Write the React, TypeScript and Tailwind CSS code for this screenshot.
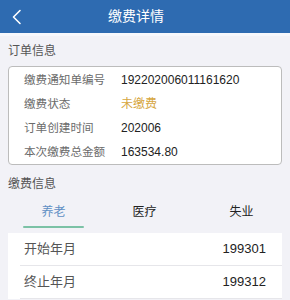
const font = { fontFamily: '"Liberation Sans", "Noto Sans CJK SC", sans-serif' };

const orderRows: { label: string; value: string; accent?: boolean }[] = [
  { label: "缴费通知单编号", value: "192202006011161620" },
  { label: "缴费状态", value: "未缴费", accent: true },
  { label: "订单创建时间", value: "202006" },
  { label: "本次缴费总金额", value: "163534.80" },
];

const periodRows = [
  { label: "开始年月", value: "199301" },
  { label: "终止年月", value: "199312" },
];

export default function App() {
  return (
    <div className="w-[290px] h-[300px] overflow-hidden bg-[#f2f2f7]" style={font}>
      {/* header */}
      <div className="relative h-[33px] bg-[#2e6bb1] flex items-center justify-center pr-[18px] border-b-[3px] border-[#f7f8fc] box-content">
        <svg className="absolute left-[11px] top-[9px]" width="12" height="16" viewBox="0 0 12 16" fill="none">
          <path d="M9 1.5 L2.5 8 L9 14.5" stroke="#ffffff" strokeWidth="1.6" strokeLinecap="round" strokeLinejoin="round" />
        </svg>
        <span className="text-white text-[14px]">缴费详情</span>
      </div>

      <div className="px-[8px]">
        <p className="h-[30px] flex items-center text-[12px] text-[#555]">订单信息</p>

        <div className="bg-white border border-[#bcbcbc] rounded-[4px] pt-[1px]">
          {orderRows.map((r) => (
            <div key={r.label} className="h-[24px] flex items-center text-[12px] whitespace-nowrap">
              <span className="w-[112px] pl-[15px] text-[#6b6b6b] shrink-0 text-[11.6px]">{r.label}</span>
              <span className={r.accent ? "text-[#d6a640]" : "text-[#222]"}>{r.value}</span>
            </div>
          ))}
        </div>

        <p className="h-[36px] pt-[2px] flex items-center text-[12px] text-[#555]">缴费信息</p>
      </div>

      {/* tabs */}
      <div className="flex h-[28px] pl-[23px]">
        <div className="w-[61px] flex flex-col items-center">
          <span className="text-[12px] h-[22px] flex items-center text-[#5f8fc4]">养老</span>
          <div className="w-[61px] h-[2px] bg-[#7cc2a6] rounded-full mt-[3px]" />
        </div>
        <div className="w-[61px] ml-[30px] flex flex-col items-center">
          <span className="text-[12px] h-[22px] flex items-center text-[#222]">医疗</span>
        </div>
        <div className="w-[61px] ml-[36px] flex flex-col items-center">
          <span className="text-[12px] h-[22px] flex items-center text-[#222]">失业</span>
        </div>
      </div>

      <div className="mx-[8px] mt-[4px] bg-white">
        {periodRows.map((r) => (
          <div key={r.label} className="h-[33px] ml-[12px] flex items-center justify-between pr-[16px] pl-[4px] border-b border-[#e6e6ea] text-[13px]">
            <span className="text-[#555]">{r.label}</span>
            <span className="text-[#222]">{r.value}</span>
          </div>
        ))}
      </div>
    </div>
  );
}
